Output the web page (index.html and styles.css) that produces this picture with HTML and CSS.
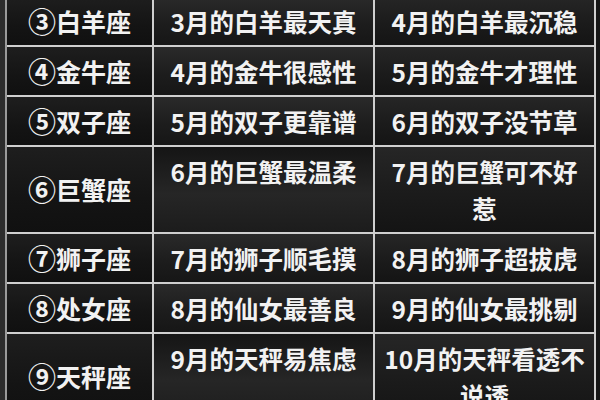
FILE: index.html
```html
<!DOCTYPE html>
<html lang="zh">
<head>
<meta charset="utf-8">
<link rel="stylesheet" href="styles.css">
</head>
<body>
<table class="zodiac">
  <tr class="row">
    <td class="sign"><span class="num">③</span>白羊座</td>
    <td class="a">3月的白羊最天真</td>
    <td class="b">4月的白羊最沉稳</td>
  </tr>
  <tr class="row">
    <td class="sign"><span class="num">④</span>金牛座</td>
    <td class="a">4月的金牛很感性</td>
    <td class="b">5月的金牛才理性</td>
  </tr>
  <tr class="row">
    <td class="sign"><span class="num">⑤</span>双子座</td>
    <td class="a">5月的双子更靠谱</td>
    <td class="b">6月的双子没节草</td>
  </tr>
  <tr class="row tall">
    <td class="sign"><span class="num">⑥</span>巨蟹座</td>
    <td class="a top">6月的巨蟹最温柔</td>
    <td class="b">7月的巨蟹可不好惹</td>
  </tr>
  <tr class="row">
    <td class="sign"><span class="num">⑦</span>狮子座</td>
    <td class="a">7月的狮子顺毛摸</td>
    <td class="b">8月的狮子超拔虎</td>
  </tr>
  <tr class="row">
    <td class="sign"><span class="num">⑧</span>处女座</td>
    <td class="a">8月的仙女最善良</td>
    <td class="b">9月的仙女最挑剔</td>
  </tr>
  <tr class="row tall">
    <td class="sign"><span class="num">⑨</span>天秤座</td>
    <td class="a top">9月的天秤易焦虑</td>
    <td class="b">10月的天秤看透不说透</td>
  </tr>
</table>
</body>
</html>
```

FILE: styles.css
```css
html, body {
  margin: 0;
  padding: 0;
  width: 600px;
  height: 400px;
  overflow: hidden;
  background: #1b1b1b;
}

body {
  background: linear-gradient(90deg, #2c2c2c 0, #2c2c2c 5px, #161616 5px);
  font-family: "Noto Sans CJK SC", "Noto Sans", sans-serif;
  font-weight: 700;
  color: #f2f2f2;
}

.zodiac {
  margin: -5px 0 0 5px;
  width: 591px;
  border-collapse: separate;
  border-spacing: 0;
  border-left: 2px solid #9a9a9a;
  border-top: 2px solid #c8c8c8;
  table-layout: fixed;
}

.zodiac td {
  height: 48px;
  padding: 0 7px;
  font-size: 25px;
  line-height: 37px;
  text-align: center;
  vertical-align: middle;
  border-right: 2px solid #cfcfcf;
  border-bottom: 2px solid #cfcfcf;
  background: linear-gradient(180deg, #2a2a2a 0%, #1d1d1d 55%, #161616 100%);
  white-space: normal;
}

.zodiac td.sign {
  width: 139px;
  padding: 0 3px;
  background: linear-gradient(180deg, #1e1e1e 0%, #141414 60%, #101010 100%);
}

.num {
  display: inline-block;
  font-family: "Noto Sans CJK SC", sans-serif;
  font-weight: 700;
  font-size: 28px;
  line-height: 37px;
  vertical-align: top;
}

.zodiac td.a,
.zodiac td.b {
  width: 205px;
  font-size: 24.5px;
}

.zodiac td.b {
  background: linear-gradient(180deg, #262626 0%, #1c1c1c 50%, #141414 100%);
}

.row.tall td {
  height: 74px;
  padding-top: 5px;
  padding-bottom: 5px;
}

.row.tall td.a {
  background: linear-gradient(180deg, #151515 0%, #262626 55%, #1c1c1c 100%);
}

.zodiac td.top {
  vertical-align: top;
  padding-top: 6px;
}
```
